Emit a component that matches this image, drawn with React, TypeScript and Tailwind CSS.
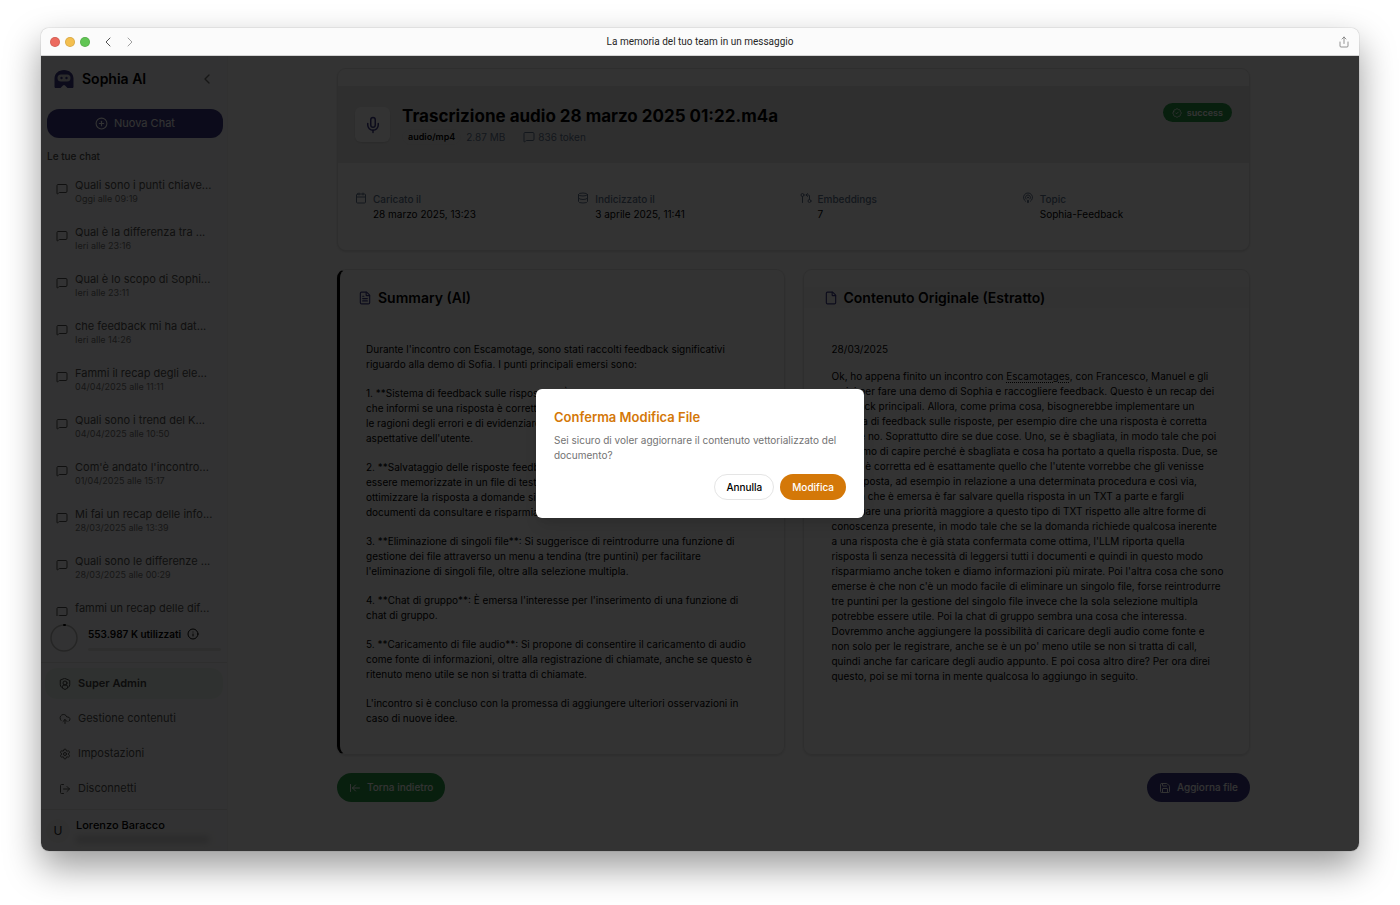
import React from 'react';
import {
  ArrowLeftToLine,
  BadgeCheck,
  Calendar,
  ChevronLeft,
  ChevronRight,
  CirclePlus,
  CloudUpload,
  Database,
  File,
  FileText,
  GitPullRequestArrow,
  Info,
  LogOut,
  MessageSquare,
  Mic,
  Podcast,
  Save,
  Settings,
  Share,
} from 'lucide-react';

const chats = [
  { title: 'Quali sono i punti chiave...', time: 'Oggi alle 09:19' },
  { title: 'Qual è la differenza tra ...', time: 'Ieri alle 23:16' },
  { title: 'Qual è lo scopo di Sophi...', time: 'Ieri alle 23:11' },
  { title: 'che feedback mi ha dat...', time: 'Ieri alle 14:26' },
  { title: 'Fammi il recap degli ele...', time: '04/04/2025 alle 11:11' },
  { title: 'Quali sono i trend del K...', time: '04/04/2025 alle 10:50' },
  { title: "Com'è andato l'incontro...", time: '01/04/2025 alle 15:17' },
  { title: 'Mi fai un recap delle info...', time: '28/03/2025 alle 13:39' },
  { title: 'Quali sono le differenze ...', time: '28/03/2025 alle 00:29' },
  { title: 'fammi un recap delle dif...', time: '' },
];

const details = [
  { label: 'Caricato il', value: '28 marzo 2025, 13:23', icon: Calendar },
  { label: 'Indicizzato il', value: '3 aprile 2025, 11:41', icon: Database },
  { label: 'Embeddings', value: '7', icon: GitPullRequestArrow },
  { label: 'Topic', value: 'Sophia-Feedback', icon: Podcast },
];

const summary = [
  `Durante l'incontro con Escamotage, sono stati raccolti feedback significativi
riguardo alla demo di Sofia. I punti principali emersi sono:`,
  `1. **Sistema di feedback sulle risposte**: È necessario implementare un sistema
che informi se una risposta è corretta o meno, permettendo di indicare
le ragioni degli errori e di evidenziare cosa sarebbe stato in linea con le
aspettative dell'utente.`,
  `2. **Salvataggio delle risposte feedback**: Le risposte corrette dovrebbero
essere memorizzate in un file di testo separato, con priorità maggiore, per
ottimizzare la risposta a domande simili, riducendo il numero di
documenti da consultare e risparmiando token.`,
  `3. **Eliminazione di singoli file**: Si suggerisce di reintrodurre una funzione di
gestione dei file attraverso un menu a tendina (tre puntini) per facilitare
l'eliminazione di singoli file, oltre alla selezione multipla.`,
  `4. **Chat di gruppo**: È emersa l'interesse per l'inserimento di una funzione di
chat di gruppo.`,
  `5. **Caricamento di file audio**: Si propone di consentire il caricamento di audio
come fonte di informazioni, oltre alla registrazione di chiamate, anche se questo è
ritenuto meno utile se non si tratta di chiamate.`,
  `L'incontro si è concluso con la promessa di aggiungere ulteriori osservazioni in
caso di nuove idee.`,
];

const transcript = `, con Francesco, Manuel e gli
amici per fare una demo di Sophia e raccogliere feedback. Questo è un recap dei
feedback principali. Allora, come prima cosa, bisognerebbe implementare un
sistema di feedback sulle risposte, per esempio dire che una risposta è corretta
oppure no. Soprattutto dire se due cose. Uno, se è sbagliata, in modo tale che poi
possiamo di capire perché è sbagliata e cosa ha portato a quella risposta. Due, se
invece è corretta ed è esattamente quello che l'utente vorrebbe che gli venisse
una risposta, ad esempio in relazione a una determinata procedura e così via,
la cosa che è emersa è far salvare quella risposta in un TXT a parte e fargli
assegnare una priorità maggiore a questo tipo di TXT rispetto alle altre forme di
conoscenza presente, in modo tale che se la domanda richiede qualcosa inerente
a una risposta che è già stata confermata come ottima, l'LLM riporta quella
risposta lì senza necessità di leggersi tutti i documenti e quindi in questo modo
risparmiamo anche token e diamo informazioni più mirate. Poi l'altra cosa che sono
emerse è che non c'è un modo facile di eliminare un singolo file, forse reintrodurre
tre puntini per la gestione del singolo file invece che la sola selezione multipla
potrebbe essere utile. Poi la chat di gruppo sembra una cosa che interessa.
Dovremmo anche aggiungere la possibilità di caricare degli audio come fonte e
non solo per le registrare, anche se è un po' meno utile se non si tratta di call,
quindi anche far caricare degli audio appunto. E poi cosa altro dire? Per ora direi
questo, poi se mi torna in mente qualcosa lo aggiungo in seguito.`;

const Logo = () => (
  <svg viewBox="0 0 20 20" className="size-5 shrink-0" aria-hidden="true">
    <path
      d="M.5 17.500V9.500C.5 4.500 4.700 1 10 1s9.500 3.500 9.500 8.500v8c0 1-.5 1.500-1.500 1.500h-4.500L11 16.500a1.500 1.500 0 0 0-2 0L6.500 19H2C1 19 .5 18.500.5 17.500z"
      fill="#3d3b86"
    />
    <rect x="3.500" y="5.500" width="13" height="7" rx="3.500" fill="#d4d4dc" />
    <circle cx="7.500" cy="9" r="1.200" fill="#3d3b86" />
    <circle cx="12.500" cy="9" r="1.200" fill="#3d3b86" />
  </svg>
);

const AdminIcon = () => (
  <svg
    viewBox="0 0 24 24"
    className="size-3 shrink-0"
    fill="none"
    stroke="currentColor"
    strokeWidth="2"
    strokeLinejoin="round"
    strokeLinecap="round"
    aria-hidden="true"
  >
    <path d="M12 1l9.500 4v8.500c0 3.500-4 7-9.500 9.500-5.500-2.500-9.500-6-9.500-9.500V5z" />
    <circle cx="12" cy="10" r="4" />
    <path d="M7 19v-2a3 3 0 0 1 3-3h4a3 3 0 0 1 3 3v2" />
  </svg>
);

const menu = [
  { label: 'Super Admin', icon: AdminIcon, active: true },
  { label: 'Gestione contenuti', icon: CloudUpload, active: false },
  { label: 'Impostazioni', icon: Settings, active: false },
  { label: 'Disconnetti', icon: LogOut, active: false },
];

function TitleBar() {
  return (
    <header className="flex h-7 shrink-0 items-center border-b border-neutral-300 bg-[#fbfbfb] px-[9px]">
      <div className="flex flex-1 items-center">
        <div className="flex gap-[5px]">
          <span className="size-[10px] rounded-full border border-black/10 bg-[#ec6a5e]" />
          <span className="size-[10px] rounded-full border border-black/10 bg-[#f4bf4f]" />
          <span className="size-[10px] rounded-full border border-black/10 bg-[#61c554]" />
        </div>
        <button aria-label="Indietro" className="ml-[10px] text-neutral-600">
          <ChevronLeft className="size-4" strokeWidth={1.5} />
        </button>
        <button aria-label="Avanti" className="ml-[6px] text-neutral-400">
          <ChevronRight className="size-4" strokeWidth={1.5} />
        </button>
      </div>
      <h1 className="font-[Roboto,sans-serif] text-[10px] text-neutral-800">La memoria del tuo team in un messaggio</h1>
      <div className="flex flex-1 justify-end">
        <button aria-label="Condividi" className="text-neutral-500">
          <Share className="size-3" strokeWidth={1.5} />
        </button>
      </div>
    </header>
  );
}

function Sidebar() {
  return (
    <aside className="flex w-[187px] shrink-0 flex-col border-r border-neutral-100 bg-[#fafafc] text-neutral-600">
      <div className="flex items-center gap-2 pt-[13px] pr-3 pl-[13px]">
        <Logo />
        <span className="flex-1 text-[14px] leading-5 font-semibold text-black">Sophia AI</span>
        <button aria-label="Chiudi barra laterale" className="text-neutral-500">
          <ChevronLeft className="size-4" />
        </button>
      </div>
      <div className="pt-5 pr-1 pl-[6px]">
        <button className="flex h-[29px] w-full items-center justify-center gap-[6px] rounded-xl bg-[#3d3b86] text-[11px] text-white">
          <CirclePlus className="size-[13px]" />
          Nuova Chat
        </button>
      </div>
      <h2 className="px-[6px] pt-[11px] text-[10px] leading-[15px] font-medium">Le tue chat</h2>
      <ul className="min-h-0 flex-1 overflow-hidden pt-2">
        {chats.map((chat) => (
          <li key={chat.title} className="h-[47px] px-[15px] pt-[5px]">
            <a href="#" className="flex gap-[7px]">
              <MessageSquare className="mt-[6px] size-3 shrink-0" />
              <span className="min-w-0 whitespace-nowrap">
                <span className="block text-[11px] leading-4">{chat.title}</span>
                {chat.time && <span className="block text-[9px] leading-3 text-neutral-500">{chat.time}</span>}
              </span>
            </a>
          </li>
        ))}
      </ul>
      <div className="flex gap-[10px] border-b border-neutral-200 pt-2 pr-[6px] pb-[10px] pl-[9px]">
        <svg viewBox="0 0 28 28" className="size-7 shrink-0" fill="none" aria-hidden="true">
          <circle cx="14" cy="14" r="13" stroke="#b8b8b8" strokeWidth="1.5" />
          <path d="M14 1h1" stroke="#000" strokeWidth="2" strokeLinecap="round" />
        </svg>
        <div className="flex-1">
          <p className="flex items-center gap-[6px] pt-[2px] text-[10px] leading-4 font-semibold text-black">
            553.987 K utilizzati
            <Info className="size-3" />
          </p>
          <div className="mt-[6px] h-[3px] rounded-full bg-neutral-200" />
        </div>
      </div>
      <nav className="flex flex-col gap-1 border-b border-neutral-200 px-1 py-[5px]">
        {menu.map((item) => {
          const Icon = item.icon;
          return (
            <a
              key={item.label}
              href="#"
              className={`flex h-[31px] items-center gap-[7px] rounded-xl px-[14px] text-[11px] ${
                item.active ? 'bg-[#ecf6ee] font-semibold text-neutral-700' : ''
              }`}
            >
              <Icon className="size-3 shrink-0" />
              {item.label}
            </a>
          );
        })}
      </nav>
      <div className="flex items-start gap-[6px] pt-[7px] pr-[6px] pb-[3px] pl-[5px]">
        <span className="mt-[2px] flex size-6 items-center justify-center rounded-full bg-neutral-100 text-xs text-neutral-800">U</span>
        <div className="flex-1 border-b-2 border-neutral-50 text-[11px] leading-4 font-medium text-black">
          Lorenzo Baracco
          <div className="mt-[3px] mr-3 h-[7px] bg-neutral-300 blur-[3px]" />
          <div className="h-[3px]" />
        </div>
      </div>
    </aside>
  );
}

function FileCard() {
  return (
    <section className="rounded-[9px] border border-neutral-200 bg-white pt-[17px] shadow-sm">
      <div className="flex items-start gap-3 bg-[#ececec] px-[17px] pt-[17px] pb-[18px]">
        <div className="mt-1 flex size-[35px] items-center justify-center rounded-md bg-white text-[#3d3b86] shadow-sm">
          <Mic className="size-[18px]" />
        </div>
        <div className="flex-1">
          <h2 className="text-[17px] leading-[26px] font-bold text-black">Trascrizione audio 28 marzo 2025 01:22.m4a</h2>
          <div className="flex items-center text-[10px] leading-4 text-slate-500">
            <span className="rounded-full border border-neutral-200 px-[5px] text-[9px] leading-[14px] font-semibold text-black">
              audio/mp4
            </span>
            <span className="ml-[5px]">2.87 MB</span>
            <MessageSquare className="mr-[3px] ml-[18px] size-3" />
            836 token
          </div>
        </div>
        <span className="flex h-[19px] items-center gap-[5px] rounded-full bg-[#2b9a48] px-[9px] text-[9px] font-semibold text-white">
          <BadgeCheck className="size-[10px]" />
          success
        </span>
      </div>
      <dl className="grid grid-cols-4 gap-3 px-[17px] pt-[29px] pb-7">
        {details.map((item) => {
          const Icon = item.icon;
          return (
            <div key={item.label} className="flex gap-[6px]">
              <Icon className="size-3 shrink-0 text-slate-500" />
              <div className="text-[10px] leading-[15px]">
                <dt className="font-medium text-slate-500">{item.label}</dt>
                <dd className="text-black">{item.value}</dd>
              </div>
            </div>
          );
        })}
      </dl>
    </section>
  );
}

function ConfirmDialog() {
  return (
    <div
      role="dialog"
      aria-labelledby="confirm-title"
      className="w-[328px] rounded-md bg-white p-[18px] shadow-lg"
    >
      <h2 id="confirm-title" className="text-[13px] leading-5 font-semibold text-[#d47808]">
        Conferma Modifica File
      </h2>
      <p className="mt-[6px] text-[10px] leading-[15px] text-neutral-500">
        Sei sicuro di voler aggiornare il contenuto vettorializzato del documento?
      </p>
      <div className="mt-[11px] flex justify-end gap-[6px] text-[10px] font-medium">
        <button className="h-[26px] rounded-full border border-neutral-200 px-[11px] text-black">Annulla</button>
        <button className="h-[26px] rounded-full bg-[#d47808] px-3 text-white">Modifica</button>
      </div>
    </div>
  );
}

export default function App() {
  return (
    <div className="flex h-screen flex-col bg-white px-[41px] pt-7 pb-[54px] font-[Inter,sans-serif]">
      <div className="flex min-h-0 flex-1 flex-col overflow-hidden rounded-lg shadow-[0_0_1px_rgba(0,0,0,0.5),0_16px_36px_rgba(0,0,0,0.4)]">
        <TitleBar />
        <div className="relative flex min-h-0 flex-1">
          <Sidebar />
          <main className="flex-1 overflow-hidden bg-white px-6 pt-3">
            <div className="mx-auto max-w-[913px]">
              <FileCard />

              <div className="mt-[18px] grid grid-cols-2 gap-[18px] text-[10px] leading-[15px] text-black">
                <section className="rounded-[9px] border border-l-[3px] border-neutral-200 border-l-black pt-[17px] pb-7 shadow-sm">
                  <h3 className="flex items-center gap-[6px] px-[18px] text-[14px] leading-[21px] font-semibold">
                    <FileText className="size-[14px] text-[#3d3b86]" />
                    Summary (AI)
                  </h3>
                  <div className="space-y-[14px] px-[26px] pt-[34px] whitespace-pre">
                    {summary.map((text) => (
                      <p key={text}>{text}</p>
                    ))}
                  </div>
                </section>
                <section className="rounded-[9px] border border-neutral-200 pt-[17px] pb-7 shadow-sm">
                  <h3 className="flex items-center gap-[6px] bg-neutral-50 px-5 text-[14px] leading-[21px] font-semibold">
                    <File className="size-[14px] text-[#3d3b86]" />
                    Contenuto Originale (Estratto)
                  </h3>
                  <div className="space-y-[12px] px-7 pt-[34px] whitespace-pre">
                    <p>28/03/2025</p>
                    <p>
                      Ok, ho appena finito un incontro con{' '}
                      <span className="underline decoration-dotted underline-offset-2">Escamotages</span>
                      {transcript}
                    </p>
                  </div>
                </section>
              </div>

              <div className="mt-[18px] flex justify-between text-[10px] font-medium text-white">
                <button className="flex h-[29px] items-center gap-[6px] rounded-full bg-[#2b9a48] px-3">
                  <ArrowLeftToLine className="size-3" />
                  Torna indietro
                </button>
                <button className="flex h-[29px] items-center gap-[6px] rounded-full bg-[#3d3b86] px-3">
                  <Save className="size-3" />
                  Aggiorna file
                </button>
              </div>
            </div>
          </main>
          <div className="absolute inset-0 flex items-center justify-center bg-black/80">
            <ConfirmDialog />
          </div>
        </div>
      </div>
    </div>
  );
}
